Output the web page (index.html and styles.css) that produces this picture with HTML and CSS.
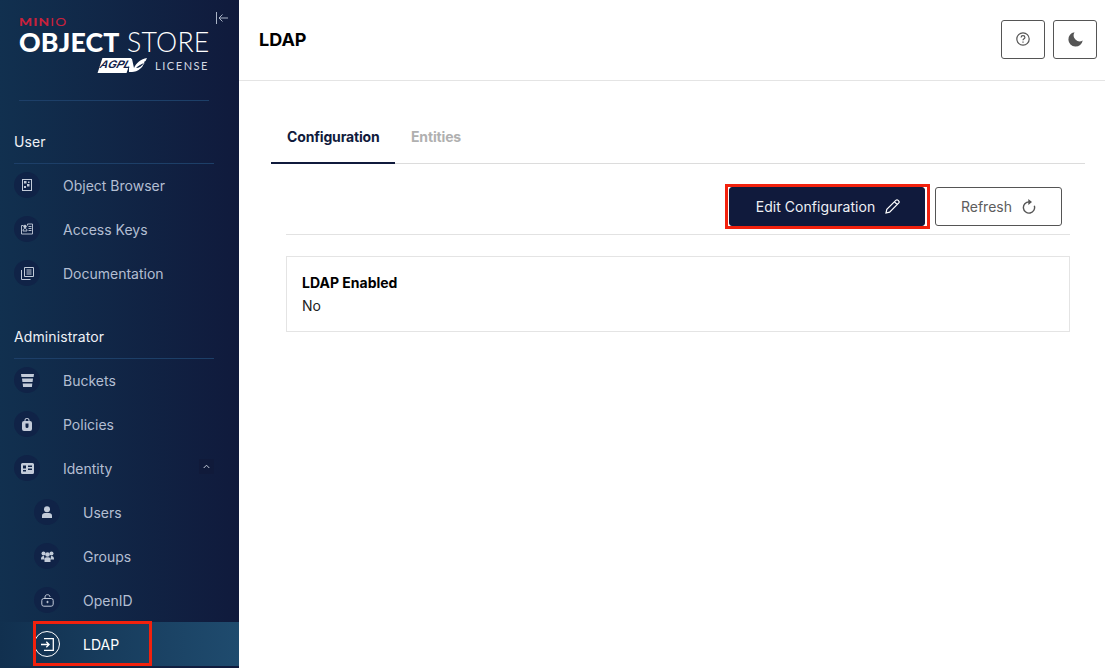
FILE: index.html
```html
<!DOCTYPE html>
<html lang="en">
<head>
<meta charset="utf-8">
<title>LDAP</title>
<link rel="stylesheet" href="styles.css">
</head>
<body>
<div class="app">
  <aside class="sidebar">
    <div class="logo-area">
      <button class="collapse" aria-label="Collapse">
        <svg width="12" height="12" viewBox="0 0 12 12" fill="none" stroke="#aab4c6" stroke-width="1"><path d="M.5 0v12M12 6H3M6.5 2.500 3 6l3.500 3.500"/></svg>
      </button>
      <div class="brand"><b>MIN</b>IO</div>
      <div class="product"><b>OBJECT</b> STORE</div>
      <div class="license-row">
        <span class="agpl"><i>AGPL</i></span>
        <svg class="agpl-wing" width="19" height="15" viewBox="0 0 19 15"><path fill="#fff" fill-rule="evenodd" d="M0 1h3l2 9c2-5 7-9 13-10-1 2-1 3-3 4 1 1 0 2-1 3 0 1-1 2-2 3-3 3-7 4-9 4H0Zm7 9c3 0 6-2 8-5-3 1-6 3-8 5Z"/></svg>
        <span class="license">LICENSE</span>
      </div>
    </div>
    <div class="logo-rule"></div>
    <nav class="nav">
      <div class="section">User</div>
      <a class="item"><span class="ico"><svg width="12" height="12" viewBox="0 0 12 12"><path fill="#c3cbd9" fill-rule="evenodd" d="M1 0h10v12H1ZM2 1v10h8V1Zm1 1h2.500v2.500H3Zm3 3h2.500v2.500H6ZM3 7h2v2H3Zm4-4.500h1.500V4H7Z"/></svg></span><span>Object Browser</span></a>
      <a class="item"><span class="ico"><svg width="12" height="12" viewBox="0 0 12 12" fill="none" stroke="#c3cbd9" stroke-width=".9"><path d="M2.500 2.500H.5v8.500h11V1H6.500v1.500"/><circle cx="4" cy="3.500" r="1.300" fill="#c3cbd9"/><path d="M2 8c0-2 1-2.500 2-2.500S6 6 6 8Zm5.500-4.500h3m-3 2h3m-3 2h3"/></svg></span><span>Access Keys</span></a>
      <a class="item"><span class="ico"><svg width="13" height="13" viewBox="0 0 13 13" fill="none" stroke="#c3cbd9" stroke-width="1"><path d="M3.500.5h9v9h-9ZM.5 3v9.500h9M5.500 3h5m-5 2h5m-5 2h5"/></svg></span><span>Documentation</span></a>
      <div class="section second">Administrator</div>
      <a class="item"><span class="ico"><svg width="13" height="13" viewBox="0 0 13 13" fill="#c3cbd9"><path d="M0 0h13l-.4 3H.4ZM1 4.500h11l-.4 3.500H1.400ZM1.700 9.500h9.600l-.4 3.500H2.100Z"/></svg></span><span>Buckets</span></a>
      <a class="item"><span class="ico"><svg width="10" height="13" viewBox="0 0 10 13"><path fill="#c3cbd9" fill-rule="evenodd" d="M2.500 3V2.200C2.500.8 3.600 0 5 0s2.500.8 2.500 2.200V3H8a2 2 0 0 1 2 2v6a2 2 0 0 1-2 2H2a2 2 0 0 1-2-2V5a2 2 0 0 1 2-2ZM3.500 3h3V2.200C6.500 1.400 5.800 1 5 1s-1.500.4-1.500 1.200ZM3.500 5.500v3a1.500 1.500 0 0 0 3 0v-3Z"/></svg></span><span>Policies</span></a>
      <a class="item"><span class="ico"><svg width="13" height="11" viewBox="0 0 13 11"><path fill="#c3cbd9" fill-rule="evenodd" d="M1.500 0h10A1.500 1.500 0 0 1 13 1.500v8a1.500 1.500 0 0 1-1.500 1.500h-10A1.500 1.500 0 0 1 0 9.500v-8A1.500 1.500 0 0 1 1.500 0ZM2 2.500v3h3v-3Zm5 0V4h4V2.500Zm0 3V7h4V5.500ZM2 7v1.500h3V7Z"/></svg></span><span>Identity</span><span class="chev"><svg width="7" height="5" viewBox="0 0 7 5" fill="none" stroke="#c3cbd9" stroke-width="1"><path d="M.7 4 3.500 1.200 6.300 4"/></svg></span></a>
      <a class="item sub"><span class="ico"><svg width="10" height="12" viewBox="0 0 10 12" fill="#c3cbd9"><circle cx="5" cy="3.200" r="3"/><path d="M0 12V9.500C0 8 1.500 7 3 7h4c1.500 0 3 1 3 2.500V12Z"/></svg></span><span>Users</span></a>
      <a class="item sub"><span class="ico"><svg width="13" height="11" viewBox="0 0 13 11" fill="#c3cbd9"><circle cx="2.500" cy="2.500" r="2"/><circle cx="10.500" cy="2.500" r="2"/><circle cx="6.500" cy="3.500" r="2.300"/><path d="M0 8c0-2 1-3 2.500-3H3l.5 3.500H0Zm13 0c0-2-1-3-2.500-3H10l-.5 3.500H13ZM3.500 11V8.500c0-1.500 1-2.300 2-2.300h2c1 0 2 .8 2 2.300V11Z"/></svg></span><span>Groups</span></a>
      <a class="item sub"><span class="ico"><svg width="13" height="13" viewBox="0 0 13 13" fill="none" stroke="#c3cbd9" stroke-width="1"><rect x=".8" y="4.500" width="11.400" height="7.700" rx="2"/><path d="M4 4.500V3c0-1.500 1-2.300 2.500-2.300S9 1.500 9 3"/><circle cx="6.500" cy="8" r=".7" fill="#c3cbd9"/></svg></span><span>OpenID</span></a>
      <a class="item sub active"><span class="ico"><svg width="13" height="13" viewBox="0 0 13 13" fill="none" stroke="#fff" stroke-width="1.300"><path d="M3 .7h9.300v11.600H3M0 6.500h8M5.300 3.700 8.100 6.500 5.300 9.300"/></svg></span><span>LDAP</span><span class="mark mark-ldap"></span></a>
    </nav>
  </aside>
  <main class="main">
    <header class="top">
      <h1>LDAP</h1>
      <div class="top-actions">
        <button class="square" aria-label="Help"><svg width="14" height="14" viewBox="0 0 14 14" fill="none" stroke="#555" stroke-width="1.200"><circle cx="7" cy="7" r="6.200"/><path d="M5.100 5.500C5.100 4.300 6 3.700 7 3.700s1.900.6 1.900 1.700C8.900 6.800 7 6.800 7 8.300"/><path d="M7 9.500v1.300"/></svg></button>
        <button class="square" aria-label="Dark mode"><svg width="15" height="15" viewBox="0 0 15 15"><path fill="#555" d="M6.500.3A7.200 7.200 0 1 0 14.700 8.500 6 6 0 0 1 6.500.3Z"/></svg></button>
      </div>
    </header>
    <section class="content">
      <div class="tabs">
        <div class="tab current">Configuration</div>
        <div class="tab">Entities</div>
      </div>
      <div class="panel">
        <div class="actions">
          <button class="btn primary">Edit Configuration
            <svg width="15" height="15" viewBox="0 0 15 15" fill="none" stroke="#fff" stroke-width="1.200"><path d="M1 14l.8-3.600L10.800 1.400a1.700 1.700 0 0 1 2.400 0l.4.400a1.700 1.700 0 0 1 0 2.400L4.600 13.200ZM9.500 2.800l2.700 2.700"/></svg>
            <span class="mark mark-edit"></span>
          </button>
          <button class="btn">Refresh
            <svg width="14" height="15" viewBox="0 0 14 15" fill="none" stroke="#555" stroke-width="1.400"><path d="M7 2.900A5.600 5.600 0 1 0 12.300 6.700"/><path fill="#555" stroke="none" d="M6.300 0 10 3 6.300 6Z"/></svg>
          </button>
        </div>
        <div class="card">
          <div class="card-label">LDAP Enabled</div>
          <div class="card-value">No</div>
        </div>
      </div>
    </section>
  </main>
</div>
</body>
</html>
```
FILE: styles.css
```css
* { box-sizing: border-box; }
html, body { margin: 0; height: 100%; overflow: hidden; }
body { font-family: Inter, "Liberation Sans", sans-serif; font-size: 14px; color: #000; background: #fff; }
.app { display: flex; height: 668px; }

.sidebar { width: 239px; flex: none; background: linear-gradient(90deg, #11304f 0%, #101a3c 100%); color: #fff; }
.logo-area { position: relative; height: 100px; padding: 17px 0 0 19px; }
.collapse { position: absolute; left: 216px; top: 12px; padding: 0; border: 0; background: none; display: flex; }
.brand { font-family: Lato, sans-serif; font-size: 11px; line-height: 9px; font-weight: 400; letter-spacing: .9px; color: #c8213c; transform: scaleX(1.250); transform-origin: left; white-space: nowrap; }
.brand b { font-weight: 900; }
.product { font-family: Lato, sans-serif; font-size: 26.700px; line-height: 26px; letter-spacing: .2px; font-weight: 300; margin-top: 3px; white-space: nowrap; }
.product b { font-weight: 900; }
.license-row { display: flex; align-items: center; padding-left: 80px; height: 16px; margin-top: 2px; }
.agpl { background: #fff; color: #10204a; font: 700 11px/13px "Liberation Sans", sans-serif; width: 29px; height: 15px; text-align: center; transform: skewX(-18deg); margin-left: 1px; flex: none; }
.agpl-wing { margin-left: 0; flex: none; }
.license { font-family: Lato, sans-serif; font-size: 11px; letter-spacing: 1.550px; color: #d4d9e3; margin-left: 7px; }
.logo-rule { height: 1px; margin: 0 30px 0 19px; background: #1d3f68; }

.nav { padding: 0 25px 0 14px; }
.section { width: 200px; height: 42px; margin-top: 21px; margin-bottom: -1px; padding-top: 11px; line-height: 17px; border-bottom: 1px solid #1d3f68; font-size: 14px; color: #eef1f6; letter-spacing: .1px; }
.section.second { margin-top: 22px; }
.item { display: flex; align-items: center; height: 44px; color: #b3bed2; font-size: 14px; position: relative; }
.ico { width: 26px; height: 26px; border-radius: 50%; background: #102347; display: flex; align-items: center; justify-content: center; margin-right: 23px; flex: none; }
.chev { position: absolute; left: 185px; top: 13px; width: 15px; height: 15px; background: #101a3a; display: flex; align-items: center; justify-content: center; }
.item.sub { margin-left: -14px; padding-left: 34px; margin-right: -25px; }
.item.sub.active { background: linear-gradient(90deg, #11304f 0%, #1f4b6e 100%); color: #fff; }
.active .ico { background: none; border: 1.500px solid #fff; }
.mark { position: absolute; border: 3px solid #f2210d; pointer-events: none; }
.mark-ldap { left: 33px; top: -1px; width: 119px; height: 45px; }
.mark-edit { left: -5px; top: -4px; width: 205px; height: 45px; }

.main { flex: 1; min-width: 0; }
.top { height: 81px; border-bottom: 1px solid #e4e4e4; display: flex; align-items: center; justify-content: space-between; padding: 0 8px 2px 20px; }
h1 { margin: 0; font-size: 18px; font-weight: 700; color: #000; }
.top-actions { display: flex; gap: 8px; }
.square { width: 44px; height: 39px; border: 1px solid #555; border-radius: 3px; background: #fff; display: flex; align-items: center; justify-content: center; padding: 0; }

.content { padding: 36px 20px 0 32px; }
.tabs { display: flex; height: 47px; border-bottom: 1px solid #dcdcdc; }
.tab { padding: 11px 16px 0; height: 47px; font-size: 14px; line-height: 17px; font-weight: 700; letter-spacing: -.15px; color: #b0b0b0; width: 82px; }
.tab.current { width: 124px; color: #101a3c; border-bottom: 2px solid #101a3c; }
.panel { padding: 23px 15px 0; }
.actions { display: flex; justify-content: flex-end; align-items: flex-start; gap: 10px; height: 48px; padding-right: 8px; border-bottom: 1px solid #e2e2e2; }
.btn { position: relative; height: 39px; border: 1px solid #555; border-radius: 3px; background: #fff; color: #5d5d5d; font: 400 14px Inter, sans-serif; letter-spacing: .03px; display: flex; align-items: center; justify-content: center; gap: 10px; width: 127px; padding: 0; }
.btn.primary { width: 196px; padding-left: 2px; background: #101a3c; border-color: #101a3c; color: #eef0f5; }
.card { margin-top: 21px; height: 76px; border: 1px solid #e4e4e4; padding: 17px 15px 0; }
.card-label { font-size: 14px; line-height: 17px; font-weight: 700; }
.card-value { font-size: 14px; line-height: 17px; margin-top: 6px; color: #222; }
```
